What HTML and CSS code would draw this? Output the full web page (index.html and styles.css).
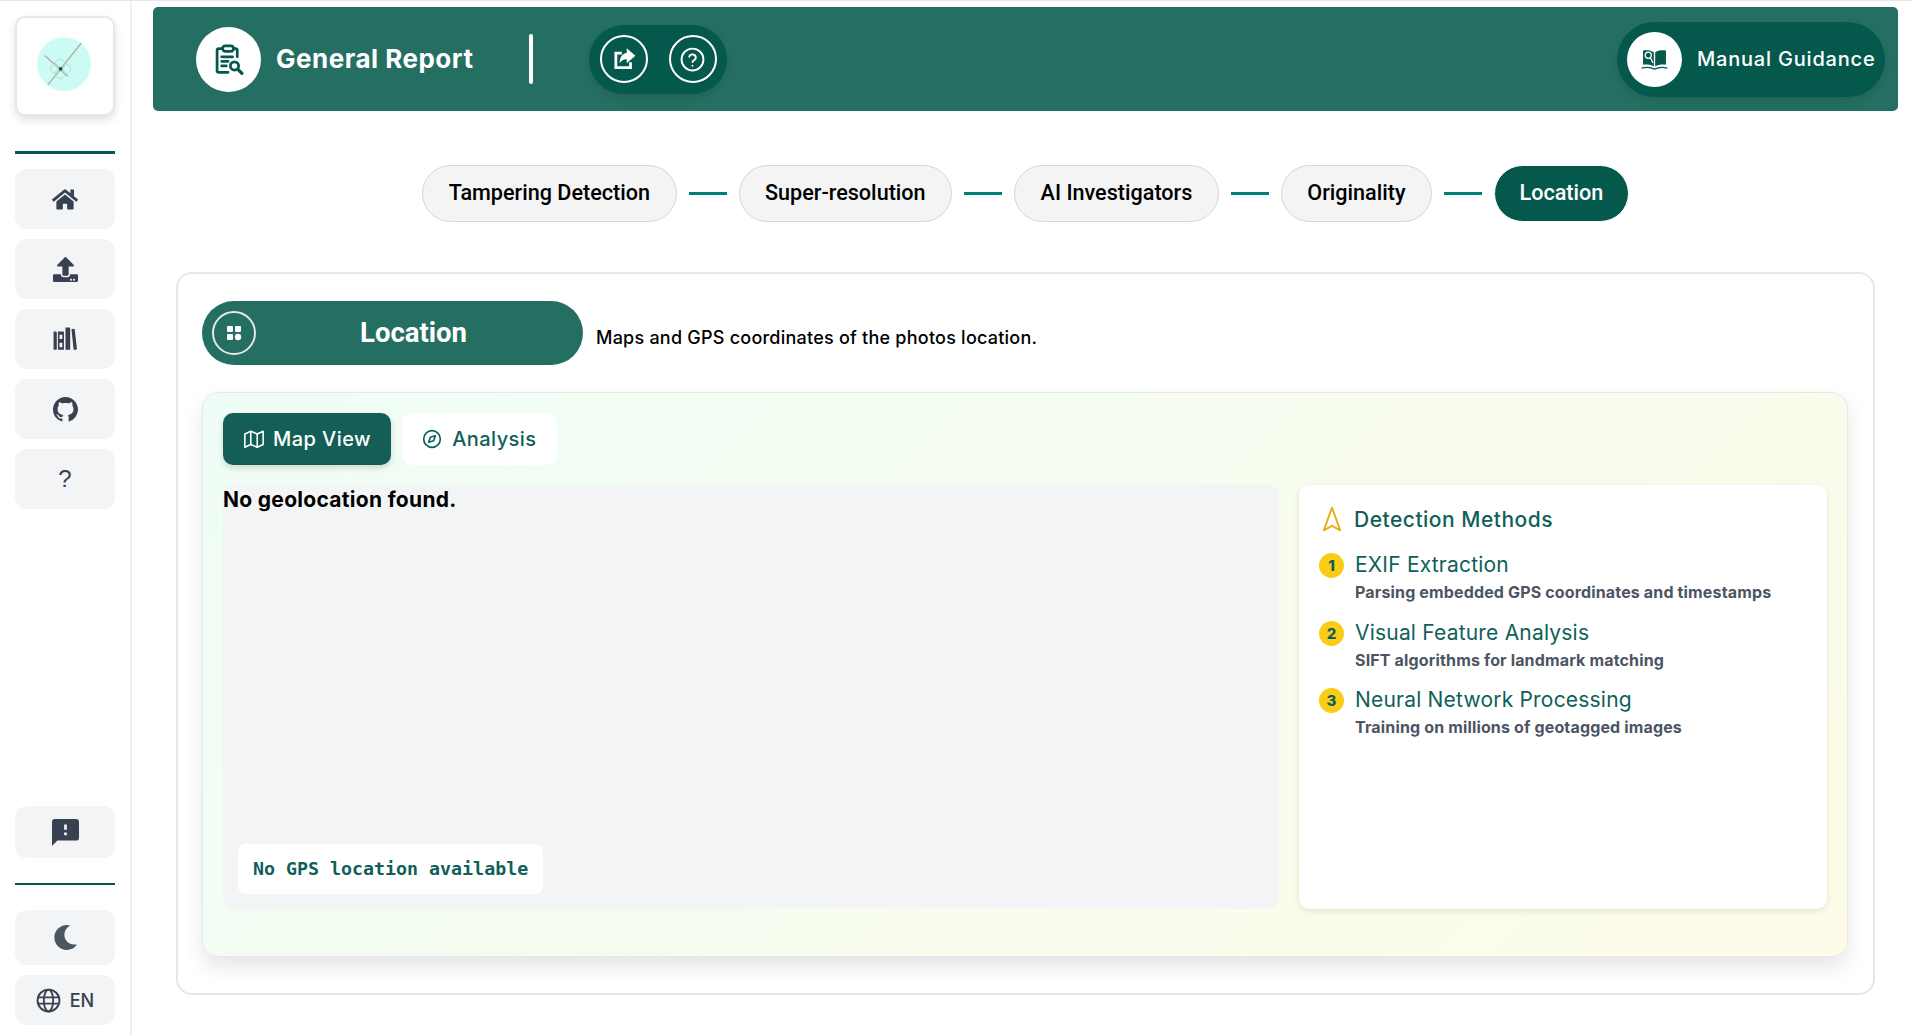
FILE: index.html
```html
<!DOCTYPE html>
<html lang="en">
<head>
    <meta charset="UTF-8">
    <title>General Report</title>
    <link rel="stylesheet" href="styles.css">
</head>
<body>
    <aside class="sidebar">
        <div class="logo-card">
            <svg viewBox="0 0 100 100" width="96" height="96">
                <circle cx="49" cy="48" r="28" fill="#ccfbf4"/>
                <line x1="67" y1="26" x2="32" y2="70" stroke="#b9a9a0" stroke-width="1.4"/>
                <line x1="29" y1="39" x2="53" y2="61" stroke="#b9a9a0" stroke-width="1.4"/>
                <circle cx="40" cy="53" r="5" fill="none" stroke="#9fd8cc" stroke-width=".8"/>
                <circle cx="51" cy="53" r="5" fill="none" stroke="#9fd8cc" stroke-width=".8"/>
                <circle cx="45" cy="48" r="5" fill="none" stroke="#9fd8cc" stroke-width=".8"/>
                <circle cx="45" cy="58" r="5" fill="none" stroke="#9fd8cc" stroke-width=".8"/>
                <circle cx="45.500" cy="53" r="1.900" fill="#05594c"/>
            </svg>
        </div>
        <div class="side-line"></div>
        <nav class="side-nav">
            <a class="side-btn">
                <svg viewBox="0 0 576 512" width="26" height="23"><path fill="#374151" d="M280.37 148.26L96 300.11V464a16 16 0 0 0 16 16l112.06-.29a16 16 0 0 0 15.92-16V368a16 16 0 0 1 16-16h64a16 16 0 0 1 16 16v95.64a16 16 0 0 0 16 16.05L464 480a16 16 0 0 0 16-16V300L295.67 148.26a12.19 12.19 0 0 0-15.3 0zM571.6 251.47L488 182.56V44.05a12 12 0 0 0-12-12h-56a12 12 0 0 0-12 12v72.61L318.47 43a48 48 0 0 0-61 0L4.34 251.47a12 12 0 0 0-1.6 16.9l25.5 31A12 12 0 0 0 45.15 301l235.22-193.74a12.19 12.19 0 0 1 15.3 0L530.9 301a12 12 0 0 0 16.9-1.6l25.5-31a12 12 0 0 0-1.7-16.93z"/></svg>
            </a>
            <a class="side-btn">
                <svg viewBox="0 0 512 512" width="25" height="25"><path fill="#374151" d="M296 384h-80c-13.3 0-24-10.7-24-24V192h-87.7c-17.8 0-26.7-21.5-14.1-34.1L242.3 5.7c7.5-7.5 19.8-7.5 27.3 0l152.2 152.2c12.6 12.6 3.7 34.1-14.1 34.1H320v168c0 13.3-10.700 24-24 24zm216-8v112c0 13.300-10.700 24-24 24H24c-13.300 0-24-10.700-24-24V376c0-13.300 10.700-24 24-24h136v8c0 30.900 25.100 56 56 56h80c30.900 0 56-25.100 56-56v-8h136c13.300 0 24 10.700 24 24zm-124 88c0-11-9-20-20-20s-20 9-20 20 9 20 20 20 20-9 20-20zm64 0c0-11-9-20-20-20s-20 9-20 20 9 20 20 20 20-9 20-20z"/></svg>
            </a>
            <a class="side-btn">
                <svg viewBox="1 1 23 22" width="25" height="24"><path fill="#374151" fill-rule="evenodd" d="M1.500 5h2a1 1 0 0 1 1 1v15a1 1 0 0 1-1 1h-1.200a.8.800 0 0 1-.8-.8zM5.500 5h5a.6.600 0 0 1 .6.600V22H5.500zM7 8v4h2.600V8zM7 15.500v4h2.600v-4zM12.500 1.500h3.500a.8.800 0 0 1 .8.800V22h-4.300zM18 3l2.200-.4c.4 0 .7.200.8.600l2 17.800c0 .4-.2.700-.6.800l-1.600.2c-.4 0-.8-.2-.9-.6z"/></svg>
            </a>
            <a class="side-btn">
                <svg viewBox="0 0 16 16" width="25" height="25"><path fill="#374151" d="M8 0C3.580 0 0 3.580 0 8c0 3.540 2.290 6.530 5.470 7.590.4.070.55-.17.55-.38 0-.19-.01-.82-.01-1.490-2.010.37-2.530-.49-2.690-.94-.09-.23-.48-.94-.82-1.130-.28-.15-.68-.52-.01-.53.63-.01 1.080.58 1.230.82.72 1.210 1.870.87 2.330.66.070-.52.28-.87.51-1.070-1.780-.2-3.640-.89-3.640-3.950 0-.87.31-1.590.82-2.150-.08-.2-.36-1.020.08-2.120 0 0 .67-.21 2.200.82.64-.18 1.320-.27 2-.27.68 0 1.360.09 2 .27 1.530-1.040 2.200-.82 2.200-.82.44 1.100.16 1.920.08 2.120.51.56.82 1.270.82 2.150 0 3.070-1.870 3.750-3.650 3.950.29.25.54.73.54 1.480 0 1.070-.01 1.930-.01 2.200 0 .21.15.46.55.38A8.013 8.013 0 0 0 16 8c0-4.420-3.580-8-8-8z"/></svg>
            </a>
            <a class="side-btn side-q">?</a>
        </nav>
        <div class="side-bottom">
            <a class="side-btn feedback">
                <svg viewBox="2 2 20 20" width="27" height="27"><path fill="#374151" d="M20 2H4c-1.100 0-1.990.9-1.990 2L2 22l4-4h14c1.100 0 2-.9 2-2V4c0-1.100-.9-2-2-2zm-7 12h-2v-2h2v2zm0-4h-2V6h2v4z"/></svg>
            </a>
            <div class="side-line thin"></div>
            <a class="side-btn moon">
                <svg viewBox="0 0 512 512" width="25" height="25"><path fill="#4b5563" d="M283.211 512c78.962 0 151.079-35.925 198.857-94.792 7.068-8.708-.639-21.43-11.562-19.35-124.203 23.654-238.262-71.576-238.262-196.954 0-72.222 38.662-138.635 101.498-174.394 9.686-5.512 7.25-20.197-3.756-22.23A258.156 258.156 0 0 0 283.211 0c-141.309 0-256 114.511-256 256 0 141.309 114.511 256 256 256z"/></svg>
            </a>
            <a class="side-btn lang">
                <svg viewBox="0 0 24 24" width="25" height="25" fill="none" stroke="#374151" stroke-width="1.800"><circle cx="12" cy="12" r="10.500"/><ellipse cx="12" cy="12" rx="4.500" ry="10.500"/><path d="M2 9h20M2 15h20"/></svg>
                <span>EN</span>
            </a>
        </div>
    </aside>

    <main class="content">
        <header class="topbar">
            <div class="topbar-left">
                <span class="white-circle title-icon">
                    <svg viewBox="0 0 32 36" width="30" height="33" fill="none" stroke="#05594c" stroke-width="3" stroke-linecap="round" stroke-linejoin="round">
                        <path d="M9 6H5a2 2 0 0 0-2 2v22a2 2 0 0 0 2 2h10"/>
                        <path d="M21 6h2a2 2 0 0 1 2 2v7"/>
                        <rect x="9" y="3" width="12" height="6" rx="3"/>
                        <path d="M8 15h12M8 20h7M8 25h5"/>
                        <circle cx="22" cy="25" r="4.500"/>
                        <path d="M25.500 28.500L30 33" stroke-width="3.500"/>
                    </svg>
                </span>
                <h1 class="page-title">General Report</h1>
                <span class="topbar-sep"></span>
                <div class="action-group">
                    <a class="action-btn">
                        <svg viewBox="0 0 24 24" width="26" height="26" fill="none"><path d="M10 6.500H4.500v13.500h13.500v-5" stroke="#fff" stroke-width="2.600"/><path fill="#fff" d="M14.500 2l8 7-8 7v-3.800c-3 0-5 1-6.500 3.800 0-5.800 2.500-9 6.500-9.500z"/></svg>
                    </a>
                    <a class="action-btn">
                        <svg viewBox="0 0 24 24" width="25" height="25" fill="none" stroke="#fff" stroke-width="1.800" stroke-linecap="round"><circle cx="12" cy="12" r="10.500"/><path d="M8.800 9.300a3.300 3.300 0 0 1 6.400 1c0 2.200-3.200 2.500-3.200 4.200"/><path d="M12 18v.1"/></svg>
                    </a>
                </div>
            </div>
            <a class="manual-btn">
                <span class="white-circle manual-icon">
                    <svg viewBox="0 0 28 22" width="27" height="21">
                        <path fill="#05594c" d="M13.300 3.500C11 1.500 6.500 1 2 1.500v15c4.500-.4 8.500 0 11.300 1.800zM14.700 3.500C17 1.500 21.500 1 26 1.500v15c-4.500-.4-8.500 0-11.300 1.800z"/>
                        <circle cx="7.500" cy="6.500" r="3.200" fill="none" stroke="#fff" stroke-width="1.300"/>
                        <path d="M9.500 9l3 5.500" fill="none" stroke="#fff" stroke-width="1.300"/>
                        <path d="M.5 20c4.500-1.200 9.500-1 13.500 1 4-2 9-2.200 13.500-1" fill="none" stroke="#05594c" stroke-width="1.400"/>
                    </svg>
                </span>
                <span class="manual-text">Manual Guidance</span>
            </a>
        </header>

        <div class="stepper">
            <a class="step">Tampering Detection</a>
            <span class="step-line"></span>
            <a class="step">Super-resolution</a>
            <span class="step-line"></span>
            <a class="step">AI Investigators</a>
            <span class="step-line"></span>
            <a class="step">Originality</a>
            <span class="step-line"></span>
            <a class="step active">Location</a>
        </div>

        <section class="card">
            <div class="card-head">
                <div class="section-pill">
                    <span class="pill-icon">
                        <svg viewBox="0 0 16 16" width="16" height="16" fill="#fff"><rect x="1" y="1" width="6" height="6" rx="1"/><rect x="9" y="1" width="6" height="6" rx="1"/><rect x="1" y="9" width="6" height="6" rx="1"/><circle cx="12" cy="12" r="3.200"/></svg>
                    </span>
                    <span class="pill-text">Location</span>
                </div>
                <p class="section-desc">Maps and GPS coordinates of the photos location.</p>
            </div>

            <div class="panel">
                <div class="tabs">
                    <a class="tab active">
                        <svg viewBox="0 0 24 24" width="22" height="22" fill="none" stroke="#fff" stroke-width="1.700" stroke-linejoin="round"><path d="M2 6.500l6.500-3 7 3 6.500-3v14.500l-6.500 3-7-3-6.500 3z"/><path d="M8.500 3.500v14.500M15.500 6.500v14.500"/></svg>
                        Map View
                    </a>
                    <a class="tab">
                        <svg viewBox="0 0 24 24" width="20" height="20" fill="none" stroke="#0f5f5a" stroke-width="2" stroke-linejoin="round"><circle cx="12" cy="12" r="10"/><path d="M16 8l-2 6-6 2 2-6z"/></svg>
                        Analysis
                    </a>
                </div>

                <div class="panel-grid">
                    <div class="map-box">
                        <p class="map-empty">No geolocation found.</p>
                        <span class="gps-badge">No GPS location available</span>
                    </div>
                    <div class="methods">
                        <div class="methods-head">
                            <svg viewBox="5 2 14 19" width="18" height="24" fill="none" stroke="#eaaf10" stroke-width="1.500" stroke-linejoin="miter"><path d="M12 2.500l6.500 18-6.500-3.500-6.500 3.500z"/></svg>
                            <h3>Detection Methods</h3>
                        </div>
                        <div class="method">
                            <span class="num">1</span>
                            <div>
                                <h4>EXIF Extraction</h4>
                                <p>Parsing embedded GPS coordinates and timestamps</p>
                            </div>
                        </div>
                        <div class="method">
                            <span class="num">2</span>
                            <div>
                                <h4>Visual Feature Analysis</h4>
                                <p>SIFT algorithms for landmark matching</p>
                            </div>
                        </div>
                        <div class="method">
                            <span class="num">3</span>
                            <div>
                                <h4>Neural Network Processing</h4>
                                <p>Training on millions of geotagged images</p>
                            </div>
                        </div>
                    </div>
                </div>
            </div>
        </section>
    </main>
</body>
</html>
```

FILE: styles.css
```css
* {
    box-sizing: border-box;
}

html, body {
    height: 100%;
}

body {
    margin: 0;
    font-family: Inter, "Noto Sans", sans-serif;
    background-color: #fff;
    color: #000;
    display: flex;
    border-top: 1px solid #e5e7eb;
    overflow: hidden;
}

h1, h3, h4, p {
    margin: 0;
}

/* sidebar */
.sidebar {
    width: 132px;
    flex-shrink: 0;
    padding: 15px 15px 10px;
    display: flex;
    flex-direction: column;
    border-right: 2px solid #f0f0f3;
}

.logo-card {
    width: 100px;
    height: 100px;
    border: 2px solid #e5e7eb;
    border-radius: 10px;
    background-color: #fff;
    box-shadow: 0 4px 8px rgba(0, 0, 0, 0.12);
    display: flex;
    align-items: center;
    justify-content: center;
}

.side-line {
    height: 3px;
    margin-top: 35px;
    background-color: #05594c;
}

.side-line.thin {
    height: 2px;
    margin: 25px 0;
}

.side-nav {
    margin-top: 15px;
    display: flex;
    flex-direction: column;
    gap: 10px;
}

.side-btn {
    height: 60px;
    border-radius: 12px;
    background-color: #f3f4f6;
    display: flex;
    align-items: center;
    justify-content: center;
}

.side-q {
    font-family: "Liberation Sans", sans-serif;
    font-size: 24px;
    color: #374151;
}

.side-bottom {
    margin-top: auto;
    display: flex;
    flex-direction: column;
}

.feedback {
    height: 52px;
}

.moon {
    height: 55px;
}

.lang {
    height: 50px;
    margin-top: 10px;
    gap: 9px;
    font-size: 18px;
    font-weight: 500;
    color: #374151;
}

/* top bar */
.content {
    flex: 1;
    min-width: 0;
    padding: 6px 15px 0 21px;
}

.topbar {
    height: 104px;
    border-radius: 5px;
    background-color: #256f62;
    padding: 0 13px 0 43px;
    display: flex;
    align-items: center;
    justify-content: space-between;
}

.topbar-left {
    display: flex;
    align-items: center;
}

.white-circle {
    border-radius: 50%;
    background-color: #fff;
    display: flex;
    align-items: center;
    justify-content: center;
    flex-shrink: 0;
}

.title-icon {
    width: 65px;
    height: 65px;
}

.page-title {
    width: 253px;
    margin: 0 0 2px 15px;
    font-size: 26px;
    font-weight: 700;
    letter-spacing: 0.5px;
    color: #fff;
}

.topbar-sep {
    width: 4px;
    height: 50px;
    border-radius: 2px;
    background-color: #fff;
}

.action-group {
    margin-left: 56px;
    height: 69px;
    padding: 0 10.5px;
    border-radius: 35px;
    background-color: #05594c;
    box-shadow: 0 4px 8px rgba(0, 0, 0, 0.1);
    display: flex;
    align-items: center;
    gap: 21px;
}

.action-btn {
    width: 48px;
    height: 48px;
    border: 2px solid #fff;
    border-radius: 50%;
    display: flex;
    align-items: center;
    justify-content: center;
}

.manual-btn {
    width: 268px;
    height: 75px;
    padding: 0 10px;
    border-radius: 38px;
    background-color: #05594c;
    box-shadow: 0 4px 8px rgba(0, 0, 0, 0.1);
    display: flex;
    align-items: center;
    gap: 15px;
}

.manual-icon {
    width: 55px;
    height: 55px;
}

.manual-text {
    font-size: 20px;
    font-weight: 500;
    letter-spacing: 0.8px;
    color: #fff;
    white-space: nowrap;
}

/* steps */
.stepper {
    margin-top: 54px;
    display: flex;
    align-items: center;
    justify-content: center;
    gap: 12px;
}

.step {
    height: 57px;
    padding: 0 25.5px 2px;
    border: 1px solid #d6d6d6;
    border-radius: 29px;
    background-color: #f4f4f4;
    font-family: Roboto, sans-serif;
    font-size: 21.6px;
    font-weight: 500;
    display: flex;
    align-items: center;
}

.step.active {
    padding: 0 24.5px 2px;
    border-color: #fff;
    background-color: #05594c;
    color: #fff;
}

.step-line {
    width: 38px;
    height: 3px;
    background-color: #00807a;
}

/* main card */
.card {
    height: 723px;
    margin: 50px 23px 0;
    padding: 27px 25px 0 24px;
    border: 2px solid #e5e7eb;
    border-radius: 16px;
}

.card-head {
    display: flex;
    align-items: center;
    gap: 13px;
}

.section-pill {
    width: 381px;
    height: 64px;
    padding-left: 10px;
    border-radius: 32px;
    background-color: #256f62;
    display: flex;
    align-items: center;
}

.pill-icon {
    width: 44px;
    height: 44px;
    border: 2px solid #e5e7eb;
    border-radius: 50%;
    display: flex;
    align-items: center;
    justify-content: center;
}

.pill-text {
    margin: 0 0 2px 104px;
    font-family: Roboto, sans-serif;
    font-size: 27.5px;
    font-weight: 700;
    color: #fff;
}

.section-desc {
    margin-top: 8px;
    font-size: 18px;
    font-weight: 500;
    letter-spacing: 0.23px;
}

.panel {
    height: 565px;
    margin-top: 27px;
    padding: 20px;
    border: 1px solid #e5e7eb;
    border-radius: 16px;
    background: linear-gradient(135deg, #effdf6, #fefce8);
    box-shadow: 0 10px 20px rgba(0, 0, 0, 0.1);
}

.tabs {
    display: flex;
    gap: 11px;
}

.tab {
    height: 52px;
    padding: 0 20px;
    border-radius: 10px;
    background-color: #fff;
    color: #0f5f5a;
    font-size: 20px;
    font-weight: 500;
    letter-spacing: 0.45px;
    display: flex;
    align-items: center;
    gap: 8px;
}

.tab + .tab {
    gap: 10px;
}

.tab.active {
    background-color: #135f57;
    color: #fff;
    box-shadow: 0 3px 6px rgba(0, 0, 0, 0.15);
}

.panel-grid {
    height: 424px;
    margin-top: 20px;
    display: grid;
    grid-template-columns: 2fr 1fr;
    gap: 20px;
}

.map-box {
    position: relative;
    border-radius: 10px;
    background-color: #f3f4f6;
}

.map-empty {
    font-size: 21px;
    font-weight: 700;
    letter-spacing: 0.3px;
    line-height: 30px;
}

.gps-badge {
    position: absolute;
    left: 15px;
    bottom: 15px;
    height: 50px;
    padding: 0 15px 2px;
    border-radius: 8px;
    background-color: #fff;
    font-family: "DejaVu Sans Mono", monospace;
    font-size: 18.3px;
    font-weight: 600;
    color: #0f5f5a;
    display: flex;
    align-items: center;
}

.methods {
    padding: 20px;
    border-radius: 10px;
    background-color: #fff;
    box-shadow: 0 2px 6px rgba(0, 0, 0, 0.1);
}

.methods-head {
    height: 28px;
    display: flex;
    align-items: center;
    gap: 13px;
    margin-left: 4px;
}

.methods-head h3 {
    font-size: 21px;
    font-weight: 500;
    letter-spacing: 0.5px;
    color: #0f5f5a;
}

.method {
    margin-top: 19px;
    display: flex;
    gap: 11px;
}

.method + .method {
    margin-top: 17.5px;
}

.num {
    width: 25px;
    height: 25px;
    margin-top: 1px;
    border-radius: 50%;
    background-color: #facc15;
    color: #0f5f5a;
    font-size: 15px;
    font-weight: 800;
    display: flex;
    align-items: center;
    justify-content: center;
    flex-shrink: 0;
}

.method h4 {
    font-size: 21px;
    font-weight: 400;
    letter-spacing: 0.2px;
    line-height: 26px;
    color: #0f5f5a;
}

.method p {
    margin-top: 4px;
    font-size: 16px;
    font-weight: 700;
    letter-spacing: 0.15px;
    line-height: 20px;
    color: #4b5563;
}
```
